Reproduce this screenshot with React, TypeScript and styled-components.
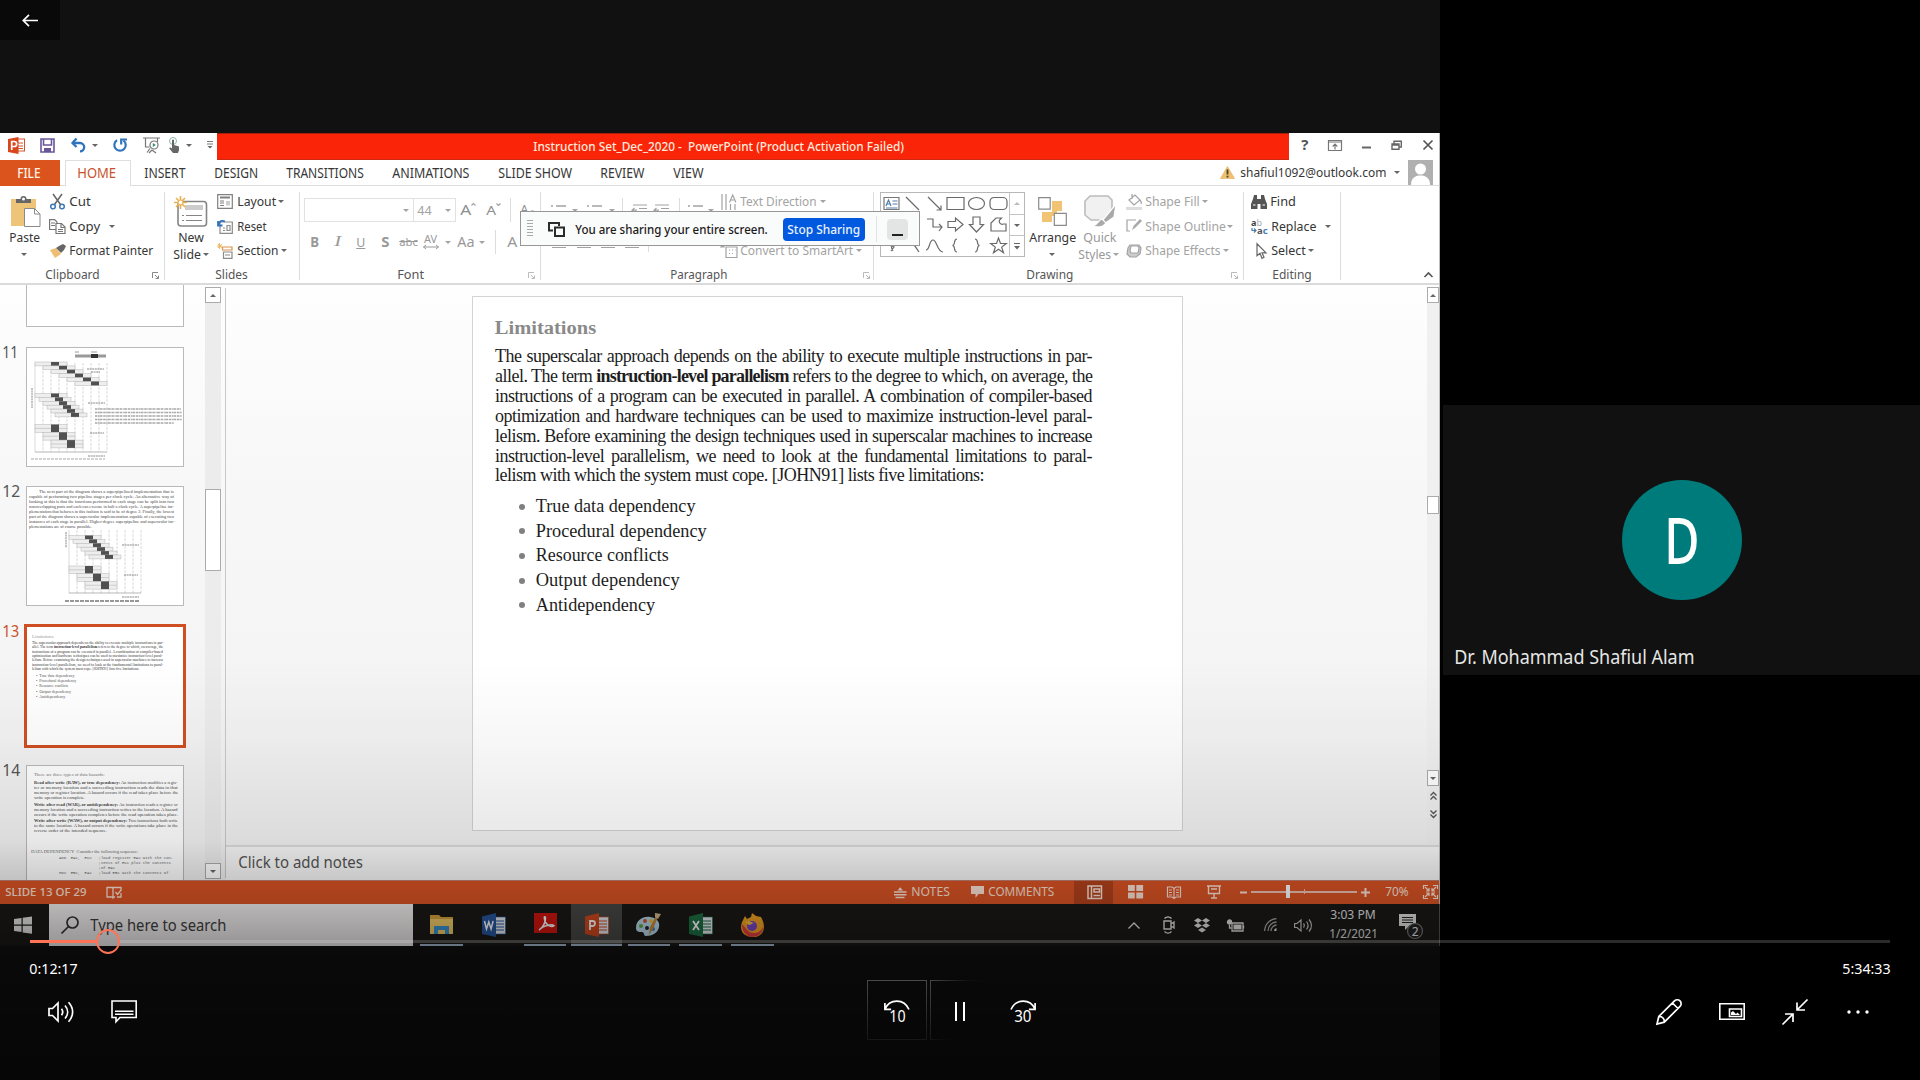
import React, { useLayoutEffect, useRef, useState } from "react";
import styled, { createGlobalStyle, css } from "styled-components";

const ui = `"Noto Sans", "Open Sans", sans-serif`;
const serif = `"Liberation Serif", serif`;

const Global = createGlobalStyle`
  * { box-sizing: border-box; }
  html, body { margin: 0; padding: 0; background: #000; overflow: hidden; }
`;

/* ---------- text that is condensed to a given width ---------- */

const FitBox = styled.span<{ $w: number; $size: number; $color?: string; $weight?: number; $ml?: number; $font?: string; $lh?: number }>`
  display: block;
  flex: none;
  width: ${(p) => p.$w}px;
  margin-left: ${(p) => p.$ml ?? 0}px;
  font-family: ${(p) => p.$font ?? ui};
  font-size: ${(p) => p.$size}px;
  font-weight: ${(p) => p.$weight ?? 400};
  color: ${(p) => p.$color ?? "#363636"};
  line-height: ${(p) => (p.$lh ? `${p.$lh}px` : "1.3")};
  white-space: pre;
`;
const FitInk = styled.span`
  display: inline-block;
  vertical-align: top;
  transform-origin: 0 50%;
`;

type FitProps = { w: number; size?: number; color?: string; weight?: number; ml?: number; font?: string; lh?: number; bearing?: number; children: React.ReactNode };
function Fit({ w, size = 13, color, weight, ml, font, lh, bearing = 0.75, children }: FitProps) {
  const ref = useRef<HTMLSpanElement>(null);
  const [scale, setScale] = useState(1);
  useLayoutEffect(() => {
    if (ref.current) setScale((w + bearing * 2) / ref.current.offsetWidth);
  }, [w, size, bearing, children]);
  return (
    <FitBox $w={w} $size={size} $color={color} $weight={weight} $ml={ml} $font={font} $lh={lh}>
      <FitInk ref={ref} style={{ transform: `translateX(${-bearing}px) scaleX(${scale})` }}>{children}</FitInk>
    </FitBox>
  );
}

/* ---------- shared parts ---------- */

const Svg = styled.svg<{ $ml?: number; $mt?: number }>`
  display: block;
  flex: none;
  margin-left: ${(p) => p.$ml ?? 0}px;
  margin-top: ${(p) => p.$mt ?? 0}px;
  overflow: visible;
`;
type IconProps = { w: number; h: number; ml?: number; mt?: number; vb?: string; children: React.ReactNode; c?: string; sw?: number };
const Icon = ({ w, h, ml, mt, vb, children, c = "#666", sw = 1.2 }: IconProps) => (
  <Svg width={w} height={h} $ml={ml} $mt={mt} viewBox={vb ?? `0 0 ${w} ${h}`} fill="none" stroke={c} strokeWidth={sw}>
    {children}
  </Svg>
);
const Caret = styled.i<{ $ml?: number; $mt?: number; $color?: string; $up?: boolean }>`
  flex: none;
  width: 0;
  height: 0;
  margin-left: ${(p) => p.$ml ?? 0}px;
  margin-top: ${(p) => p.$mt ?? 0}px;
  border-left: 3px solid transparent;
  border-right: 3px solid transparent;
  ${(p) => (p.$up ? css`border-bottom: 3.5px solid ${p.$color ?? "#666"};` : css`border-top: 3.5px solid ${p.$color ?? "#666"};`)}
`;
const Cell = styled.div<{ $w: number }>`
  flex: none;
  width: ${(p) => p.$w}px;
  display: flex;
  align-items: center;
  justify-content: center;
`;
const VLine = styled.div<{ $h: number }>`
  width: 1px;
  height: ${(p) => p.$h}px;
  background: #dcdcdc;
`;

/* ---------- stage ---------- */

const Stage = styled.div`
  position: relative;
  width: 1920px;
  height: 1080px;
  display: grid;
  grid-template-columns: 1440px 480px;
  overflow: hidden;
  background: #000;
  font-family: ${ui};
`;
const Shared = styled.div`
  display: flex;
  flex-direction: column;
  width: 1440px;
  height: 1080px;
  padding-top: 133px;
  background: #111;
`;
const Window = styled.div`
  flex: none;
  height: 771px;
  display: flex;
  flex-direction: column;
  background: #fff;
  border-right: 1px solid #bdbdbd;
  overflow: hidden;
`;

/* title bar */
const TitleBar = styled.div`
  flex: none;
  height: 27px;
  display: flex;
`;
const QuickAccess = styled.div`
  width: 217px;
  display: flex;
  align-items: center;
  padding-bottom: 3px;
`;
const RedTitle = styled.div`
  width: 1072px;
  padding: 2px 0 0 317px;
  background: #fa2508;
  border-top: 1px solid #a81d0c;
  border-bottom: 1px solid #cc2a12;
  display: flex;
  align-items: center;
`;
const WindowButtons = styled.div`
  width: 150px;
  display: flex;
  align-items: center;
  padding-bottom: 3px;
`;

/* tab row */
const TabRow = styled.div`
  flex: none;
  height: 26px;
  display: flex;
  border-bottom: 1px solid #dedede;
`;
const FileTab = styled.div`
  width: 60px;
  padding: 1px 0 0 18px;
  height: 26px;
  background: #db531d;
  display: flex;
  align-items: center;
`;
const HomeTab = styled.div`
  width: 66px;
  height: 26px;
  margin-left: 5px;
  padding: 1px 0 0 12px;
  background: #fff;
  border: 1px solid #dedede;
  border-bottom: 0;
  display: flex;
  align-items: center;
`;
const Tabs = styled.div`
  display: flex;
  align-items: center;
  gap: 30px;
  margin-left: 14px;
  padding-top: 2px;
`;
const Account = styled.div`
  margin-left: auto;
  width: 220px;
  display: flex;
  align-items: center;
`;

/* ribbon */
const Ribbon = styled.div`
  flex: none;
  height: 99px;
  display: flex;
  border-bottom: 2px solid #dadada;
`;
const Group = styled.div<{ $w: number }>`
  position: relative;
  flex: none;
  width: ${(p) => p.$w}px;
  display: grid;
  grid-template-rows: 81px 16px;
  &::after {
    content: "";
    position: absolute;
    right: 0;
    top: 6px;
    width: 1px;
    height: 88px;
    background: #dcdcdc;
  }
`;
const GroupBody = styled.div`
  display: flex;
`;
const GroupFoot = styled.div`
  display: flex;
  align-items: center;
`;
const Rows = styled.div<{ $ml?: number }>`
  display: grid;
  grid-template-rows: repeat(3, 24.5px);
  align-content: start;
  padding-top: 3.5px;
  margin-left: ${(p) => p.$ml ?? 0}px;
`;
const Row = styled.div`
  display: flex;
  align-items: center;
`;
const BigButton = styled.div<{ $w: number; $ml?: number; $pt?: number }>`
  width: ${(p) => p.$w}px;
  margin-left: ${(p) => p.$ml ?? 0}px;
  padding-top: ${(p) => p.$pt ?? 7}px;
  display: grid;
  grid-template-rows: 36px 17px 16px;
  align-content: start;
  justify-items: center;
  align-items: center;
`;
const FontRows = styled.div`
  display: grid;
  grid-template-rows: 24px 20px;
  align-content: start;
  row-gap: 10px;
  padding: 12px 0 0 4px;
`;
const Combo = styled.div<{ $w: number }>`
  width: ${(p) => p.$w}px;
  height: 24px;
  border: 1px solid #e1e1e1;
  display: flex;
  align-items: center;
  justify-content: flex-end;
  padding-right: 4px;
  & + & { border-left: 0; }
`;
const Gallery = styled.div`
  width: 145px;
  height: 65px;
  margin: 6px 0 0 6px;
  border: 1px solid #b8b8b8;
  display: grid;
  grid-template-columns: 128px 15px;
`;
const Shapes = styled.div`
  display: grid;
  grid-template-columns: repeat(6, 21.3px);
  grid-template-rows: repeat(3, 21px);
  align-items: center;
  justify-items: center;
`;
const GalleryScroll = styled.div`
  display: grid;
  grid-template-rows: repeat(3, 21px);
  border-left: 1px solid #c4c4c4;
`;
const GalleryStep = styled.div`
  display: flex;
  align-items: center;
  justify-content: center;
  & + & { border-top: 1px solid #c4c4c4; }
`;

/* sharing bar */
const ShareBar = styled.div`
  position: absolute;
  left: 520px;
  top: 211px;
  width: 400px;
  height: 35px;
  padding-top: 1px;
  background: #fafbfb;
  border: 1.5px solid #979797;
  display: flex;
  align-items: center;
`;
const Grip = styled.div`
  width: 6px;
  height: 18px;
  margin-left: 6px;
  background: repeating-linear-gradient(#a8a8a8 0 1px, transparent 1px 3px);
`;
const StopButton = styled.div`
  width: 82px;
  height: 23px;
  margin-left: 16px;
  border-radius: 4px;
  background: #0059de;
  padding: 1px 0 0 5px;
  display: flex;
  align-items: center;
`;
const ShareDivider = styled.div`
  width: 1px;
  height: 26px;
  margin-left: 11px;
  background: #e3e3e3;
`;
const HideButton = styled.div`
  width: 21px;
  height: 21px;
  margin-left: 10px;
  border-radius: 4px;
  background: #e3e4e4;
  display: flex;
  justify-content: center;
  padding-top: 15px;
  &::after { content: ""; width: 11px; height: 2px; background: #222; }
`;

/* work area */
const Work = styled.div`
  flex: none;
  height: 595px;
  display: grid;
  grid-template-columns: 205px 16px 5px 1213px;
  background: linear-gradient(#fefefe, #f8f8f8 30%, #f1f1f1);
`;
const ThumbList = styled.div`
  height: 595px;
  overflow: hidden;
  display: flex;
  flex-direction: column;
`;
const ThumbRow = styled.div<{ $mt: number }>`
  flex: none;
  display: flex;
  margin-top: ${(p) => p.$mt}px;
`;
const ThumbNo = styled.div`
  width: 26px;
  padding-left: 3px;
  margin-top: -6px;
`;
const Thumb = styled.div<{ $on?: boolean }>`
  width: 158px;
  height: 120px;
  background: #fff;
  outline: ${(p) => (p.$on ? "3px solid #cf4f22" : "0")};
  border: 1px solid ${(p) => (p.$on ? "#cf4f22" : "#b9b9b9")};
  outline-offset: -1px;
`;
const Tiny = styled.div<{ $pl: number; $pt: number }>`
  display: flex;
  flex-direction: column;
  padding: ${(p) => p.$pt}px 0 0 ${(p) => p.$pl}px;
`;
const ScrollTrack = styled.div`
  height: 592px;
  margin-top: 2px;
  background: #ececec;
  display: flex;
  flex-direction: column;
`;
const ScrollButton = styled.div<{ $mt?: number; $plain?: boolean }>`
  height: 16px;
  margin-top: ${(p) => p.$mt ?? 0}px;
  border: ${(p) => (p.$plain ? "0" : "1px solid #ababab")};
  background: ${(p) => (p.$plain ? "transparent" : "#fff")};
  display: flex;
  align-items: center;
  justify-content: center;
`;
const ScrollThumb = styled.div<{ $mt: number; $h: number }>`
  height: ${(p) => p.$h}px;
  margin-top: ${(p) => p.$mt}px;
  background: #fff;
  border: 1px solid #ababab;
`;
const Divider = styled.div`
  width: 1px;
  height: 590px;
  margin: 3px 0 0 4px;
  background: #c8c8c8;
`;
const Editor = styled.div`
  display: grid;
  grid-template-rows: 560px 35px;
`;
const Canvas = styled.div`
  display: grid;
  grid-template-columns: 1201px 12px;
`;
const Slide = styled.div`
  width: 711px;
  height: 535px;
  margin: 11px 0 0 246px;
  background: #fff;
  border: 1px solid #d3d3d3;
  padding: 20px 0 0 22px;
`;
const SlideTitle = styled.h1`
  margin: 0;
  font: 700 18px/22px ${serif};
  color: #8a8a8a;
`;
const BodyText = styled.p`
  margin: 8px 0 0;
  width: 598px;
  font: 400 18px/19.9px ${serif};
  letter-spacing: -0.52px;
  color: #1d1d1d;
`;
const BodyLine = styled.span<{ $w?: number }>`
  display: block;
  width: ${(p) => p.$w ?? 597}px;
  text-align-last: justify;
  white-space: nowrap;
  b { letter-spacing: -0.8px; }
`;
const Bullets = styled.ul`
  margin: 8px 0 0;
  padding: 0 0 0 24px;
  list-style: none;
`;
const Bullet = styled.li`
  height: 24.7px;
  display: flex;
  align-items: center;
  &::before {
    content: "";
    width: 6px;
    height: 6px;
    border-radius: 3px;
    margin-right: 11px;
    background: #808080;
  }
`;
const RightScroll = styled.div`
  margin-top: 2px;
  display: flex;
  flex-direction: column;
  background: #f0f0f0;
`;
const Notes = styled.div`
  border-top: 2px solid #dcdcdc;
  display: flex;
  align-items: center;
  padding: 0 0 2px 13px;
  background: #f8f8f8;
`;

/* status bar */
const StatusBar = styled.div`
  flex: none;
  height: 24px;
  background: #dc5425;
  border-top: 1px solid #c08070;
  padding-bottom: 1px;
  display: flex;
  align-items: center;
`;
const ActiveView = styled.div`
  width: 39px;
  height: 23px;
  margin-left: 20px;
  background: #b5421c;
  display: flex;
  align-items: center;
  justify-content: center;
`;
const ZoomTrack = styled.div`
  position: relative;
  width: 106px;
  height: 1.5px;
  margin-left: 4px;
  background: #f0c4b4;
  &::before {
    content: "";
    position: absolute;
    left: 35px;
    top: -6px;
    width: 4px;
    height: 13px;
    background: #fff;
  }
  &::after {
    content: "";
    position: absolute;
    left: 53px;
    top: -2px;
    width: 1px;
    height: 5px;
    background: #f0c4b4;
  }
`;

/* taskbar */
const Taskbar = styled.div`
  flex: none;
  height: 42px;
  display: flex;
  background: #1a1917;
  border-right: 1px solid #555;
`;
const Start = styled.div`
  width: 49px;
  display: flex;
  align-items: center;
  padding-left: 14px;
`;
const Search = styled.div`
  width: 364px;
  background: #f4f1f1;
  display: flex;
  align-items: center;
  padding-left: 12px;
`;
const AppButton = styled.div<{ $ml: number; $w: number; $open?: boolean; $on?: boolean }>`
  width: ${(p) => p.$w}px;
  margin-left: ${(p) => p.$ml}px;
  padding-top: 9px;
  display: flex;
  justify-content: center;
  align-items: flex-start;
  background: ${(p) => (p.$on ? "#484846" : "transparent")};
  border-bottom: ${(p) => (p.$open ? "2px solid #a9bcd2" : "0")};
`;
const Tray = styled.div`
  margin-left: auto;
  width: 311px;
  display: flex;
  align-items: center;
`;
const Clock = styled.div`
  margin-left: 17px;
  width: 48px;
  display: grid;
  grid-template-rows: 19px 19px;
  justify-items: center;
  align-items: center;
`;

/* participants */
const Participants = styled.div`
  padding: 405px 0 0 3px;
`;
const Tile = styled.div`
  height: 270px;
  background: #111;
  display: grid;
  grid-template-rows: 195px 75px;
  padding-left: 12px;
`;
const Avatar = styled.div`
  width: 120px;
  height: 120px;
  margin: 75px 0 0 167px;
  border-radius: 50%;
  background: #007b7b;
  display: flex;
  align-items: center;
  justify-content: center;
`;
const TileName = styled.div`
  padding-top: 44px;
`;

/* player chrome */
const Player = styled.div`
  position: absolute;
  inset: 0;
  display: grid;
  grid-template-rows: 40px 1fr 154px;
  background: linear-gradient(transparent 660px, rgba(0,0,0,.03) 740px, rgba(0,0,0,.09) 840px, rgba(0,0,0,.2) 882px, rgba(0,0,0,.25) 905px, rgba(0,0,0,.38) 944px, rgba(0,0,0,.48) 960px, rgba(0,0,0,.66) 1080px);
`;
const Back = styled.div`
  width: 60px;
  height: 40px;
  background: #090909;
  display: flex;
  align-items: center;
  justify-content: center;
`;
const Controls = styled.div`
  grid-row: 3;
  display: grid;
  grid-template-rows: 31px 23px 1fr;
`;
const Seek = styled.div`
  display: flex;
  align-items: center;
  padding: 0 30px;
`;
const Played = styled.div`
  width: 66px;
  height: 3px;
  background: #ff7357;
`;
const Knob = styled.div`
  width: 24px;
  height: 25px;
  border: 2px solid #ff7357;
  border-radius: 50%;
`;
const Remaining = styled.div`
  flex: 1;
  height: 3px;
  background: rgba(255, 255, 255, 0.17);
`;
const Times = styled.div`
  display: flex;
  justify-content: space-between;
  align-items: center;
  padding: 0 30px;
`;
const ButtonBar = styled.div`
  display: grid;
  grid-template-columns: 1fr auto 1fr;
  align-items: start;
`;
const Buttons = styled.div<{ $end?: boolean }>`
  display: flex;
  gap: 3px;
  padding: 0 32px 0 31px;
  justify-content: ${(p) => (p.$end ? "flex-end" : "flex-start")};
`;
const Centre = styled(Buttons)`
  padding: 0;
`;
const Button = styled.div<{ $frame?: "full" | "fade" }>`
  width: 60px;
  height: 60px;
  padding-top: 3px;
  display: grid;
  place-items: center;
  border: 1px solid transparent;
  ${(p) => p.$frame === "full" && css`border-image: linear-gradient(#4a4a4a, #161616) 1;`}
  ${(p) => p.$frame === "fade" && css`border-image: linear-gradient(120deg, #4a4a4a, #111 40%, transparent 60%) 1;`}
`;
const SkipStack = styled.div`
  display: grid;
  grid-template-rows: 10px 13px;
  justify-items: center;
  align-items: center;
`;

/* ---------- drawings ---------- */

function Stairs({ x, y, n, dx, dy, bw = 8 }: { x: number; y: number; n: number; dx: number; dy: number; bw?: number }) {
  return (
    <g>
      {Array.from({ length: n }, (_, i) => (
        <g key={i}>
          <rect x={x + i * dx} y={y + i * dy} width={bw * 4} height={dy} fill="#eee" stroke="#b5b5b5" strokeWidth={0.5} />
          {dy > 5 && <path d={`M${x + i * dx} ${y + i * dy + dy / 2}h${bw * 4}`} stroke="#aaa" strokeWidth={0.5} />}
          <rect x={x + bw * 2 + i * dx} y={y + i * dy} width={bw} height={dy} fill="#505050" stroke="none" />
        </g>
      ))}
    </g>
  );
}
const Dashes = ({ x, y, n, h }: { x: number; y: number; n: number; h: number }) => (
  <g stroke="#c4c4c4" strokeWidth={0.6}>
    {Array.from({ length: n }, (_, i) => <path key={i} d={`M${x + i * 8} ${y}v${h}`} strokeDasharray={i ? "3 1" : "none"} />)}
    <path d={`M${x} ${y + h}h${(n - 1) * 8}`} stroke="#888" />
  </g>
);

const GRAY = "#a3a3a3";

const bodyLines: [React.ReactNode, number?][] = [
  ["The superscalar approach depends on the ability to execute multiple instructions in par-"],
  [<>allel. The term <b>instruction-level parallelism</b> refers to the degree to which, on average, the</>],
  ["instructions of a program can be executed in parallel. A combination of compiler-based"],
  ["optimization and hardware techniques can be used to maximize instruction-level paral-"],
  ["lelism. Before examining the design techniques used in superscalar machines to increase"],
  ["instruction-level parallelism, we need to look at the fundamental limitations to paral-"],
  ["lelism with which the system must cope. [JOHN91] lists five limitations:", 489],
];
const bullets: [string, number][] = [
  ["True data dependency", 159],
  ["Procedural dependency", 170],
  ["Resource conflicts", 132],
  ["Output dependency", 143],
  ["Antidependency", 119],
];
const slide12 = [
  "The next part of the diagram shows a superpipelined implementation that is",
  "capable of performing two pipeline stages per clock cycle. An alternative way of",
  "looking at this is that the functions performed in each stage can be split into two",
  "nonoverlapping parts and each can execute in half a clock cycle. A superpipeline im-",
  "plementation that behaves in this fashion is said to be of degree 2. Finally, the lowest",
  "part of the diagram shows a superscalar implementation capable of executing two",
  "instances of each stage in parallel. Higher-degree superpipeline and superscalar im-",
  "plementations are of course possible.",
];
const slide14: [string, string[], number][] = [
  ["Read after write (RAW), or true dependency:", ["An instruction modifies a regis-", "ter or memory location and a succeeding instruction reads the data in that", "memory or register location. A hazard occurs if the read takes place before the", "write operation is complete."], 51],
  ["Write after read (WAR), or antidependency:", ["An instruction reads a register or", "memory location and a succeeding instruction writes to the location. A hazard", "occurs if the write operation completes before the read operation takes place."], 144],
  ["Write after write (WAW), or output dependency:", ["Two instructions both write", "to the same location. A hazard occurs if the write operations take place in the", "reverse order of the intended sequence."], 73],
];

const tabs: [string, number][] = [["INSERT", 40], ["DESIGN", 42], ["TRANSITIONS", 76], ["ANIMATIONS", 76], ["SLIDE SHOW", 72], ["REVIEW", 43], ["VIEW", 29]];

const Launcher = ({ ml, c = "#888" }: { ml: number; c?: string }) => (
  <Icon w={7} h={7} ml={ml} c={c} sw={1}><path d="M.5 6V.5H6M3 3l3.500 3.500M6.500 3.500v3h-3" /></Icon>
);

function TopBar() {
  return (
    <TitleBar>
      <QuickAccess>
        <Icon w={17} h={17} ml={8} sw={1}>
          <rect x="9" y="2" width="7.500" height="12" fill="#fff" stroke="#d2552c" />
          <path d="M10 6h5M10 9h5M10 11.500h5" stroke="#d2552c" />
          <path d="M0 2L10.500 0v17L0 15z" fill="#d9461c" stroke="none" />
          <path d="M3.700 13V4.500h2.500a2.300 2.300 0 0 1 0 5H4" stroke="#fff" strokeWidth="1.700" />
        </Icon>
        <Icon w={15} h={15} ml={15} c="#6a559b" sw={1.600}><path d="M1 1h13v13H1zM3.500 1v6h8V1" /><rect x="4" y="10" width="7" height="4" fill="#6a559b" stroke="none" /></Icon>
        <Icon w={15} h={14} ml={16} c="#2f74bd" sw={2.300}><path d="M1.500 5h7.500a4.200 4.200 0 0 1 0 8.400" /><path d="M5.500 .5L1.500 5l4 4" /></Icon>
        <Caret $ml={6} />
        <Icon w={14} h={14} ml={15} c="#2f74bd" sw={2.200}><path d="M4 2.200A5.700 5.700 0 1 0 10.500 2.500" /><path d="M8.200 6.500V1.500H14" /></Icon>
        <Icon w={17} h={16} ml={16} c="#777" sw={1.200}><path d="M0 1h17M2.500 1v9h4M14.500 1v4M4 15.500l3-4M9 13l-3 3M9 13l4 3" /><circle cx="11" cy="8" r="4" /><path d="M9.800 6l3 2-3 2z" fill="#3a8d6b" stroke="none" /></Icon>
        <Icon w={12} h={16} ml={8} c="#777" sw={1}><circle cx="5" cy="4" r="3.500" stroke="#8cb5a8" /><path d="M4 3.500a1 1 0 0 1 2 0V8l5 1.500V13l-1 3H5L1 11l1.500-.5L4 11.500z" fill="#666" stroke="none" /></Icon>
        <Caret $ml={6} />
        <Icon w={6} h={8} ml={15} c="#777" sw={1}><path d="M0 .5h6M0 3h6" /><path d="M.5 5h5L3 7.500z" fill="#666" stroke="none" /></Icon>
      </QuickAccess>
      <RedTitle><Fit w={369} size={12.500} weight={500} color="#ffe9dc">{"Instruction Set_Dec_2020 -  PowerPoint (Product Activation Failed)"}</Fit></RedTitle>
      <WindowButtons>
        <Fit w={6} ml={13} size={14} weight={700} color="#555">?</Fit>
        <Icon w={14} h={11} ml={20} c="#777"><path d="M.5 .5h13v10H.5zM.5 2h13M7 9.500V4.500M4.700 6.500L7 4.200l2.300 2.300" /></Icon>
        <Icon w={9} h={3} ml={20} mt={4} c="#666" sw={2}><path d="M0 1.500h9" /></Icon>
        <Icon w={11} h={10} ml={20} c="#666" sw={1.400}><path d="M1 4h7v5.300H1zM3 4V1.200h7.300V7H8M1 5h7" /></Icon>
        <Icon w={10} h={10} ml={21} c="#555" sw={1.700}><path d="M.5 .5l9 9M9.500 .5l-9 9" /></Icon>
      </WindowButtons>
    </TitleBar>
  );
}

function TabStrip() {
  return (
    <TabRow>
      <FileTab><Fit w={22} size={13.500} weight={500} color="#fff3ea">FILE</Fit></FileTab>
      <HomeTab><Fit w={37} size={13.500} color="#c9522b">HOME</Fit></HomeTab>
      <Tabs>{tabs.map(([t, w]) => <Fit key={t} w={w} size={13.500}>{t}</Fit>)}</Tabs>
      <Account>
        <Icon w={15} h={13} ml={1} c="#eec27a" sw={1}><path d="M7.500 .5L14.500 12.500H.5z" fill="#eebf6f" /><path d="M7.500 3.500v5M7.500 9.700v1.700" stroke="#443" strokeWidth="1.800" /></Icon>
        <Fit w={145} ml={6} size={13}>shafiul1092@outlook.com</Fit>
        <Caret $ml={8} />
        <Icon w={24} h={25} ml={8} c="none"><rect width="25" height="25" fill="#b0b0b0" /><circle cx="12.500" cy="9" r="5.500" fill="#fff" /><path d="M3 25c0-7 4-9.500 9.500-9.500S22 18 22 25z" fill="#fff" /></Icon>
      </Account>
    </TabRow>
  );
}

function ClipboardGroup() {
  return (
    <Group $w={165}>
      <GroupBody>
        <BigButton $w={44} $ml={4}>
          <Icon w={31} h={33} ml={-2} sw={1}>
            <rect x="1" y="4" width="25" height="27" fill="#eec479" stroke="none" />
            <path d="M6 8V4h4.500a3 3 0 0 1 6 0H21v4z" fill="#666" stroke="none" /><circle cx="13.500" cy="4" r="1.500" fill="#fff" stroke="none" />
            <path d="M14.500 13.500h10l5.500 5.500v12.500H14.500z" fill="#fff" stroke="#8a8a8a" /><path d="M24.500 13.500V19H30" stroke="#8a8a8a" />
          </Icon>
          <Fit w={29} ml={-4}>Paste</Fit>
          <Caret $ml={-4} />
        </BigButton>
        <Rows $ml={2}>
          <Row>
            <Icon w={15} h={16} c="#666" sw={1.500}><path d="M3 0l7.500 10.500M12 0L4.500 10.500" /><circle cx="3" cy="12.500" r="2.300" stroke="#3e78b2" /><circle cx="12" cy="12.500" r="2.300" stroke="#3e78b2" /></Icon>
            <Fit w={20} ml={5}>Cut</Fit>
          </Row>
          <Row>
            <Icon w={17} h={15} ml={-1} c="#777"><path d="M.6 .6h5L8 3v7.500H.6zM2 4h4M2 6.500h4" /><path d="M7 4.500h5.500L16 8v6.500H7z" fill="#fff" /><path d="M12 4.500V8.500h4M9 10.500h5M9 12.500h5" /></Icon>
            <Fit w={29} ml={4}>Copy</Fit><Caret $ml={10} />
          </Row>
          <Row>
            <Icon w={16} h={14} c="none"><path d="M0 6l6-2 5 6-6 4z" fill="#eebf72" /><path d="M6 4l3-2 4-2 3 2-2 4-3 3z" fill="#666" /></Icon>
            <Fit w={82} ml={4}>Format Painter</Fit>
          </Row>
        </Rows>
      </GroupBody>
      <GroupFoot><Fit w={53} ml={46} size={12.500} color="#555">Clipboard</Fit><Launcher ml={53} /></GroupFoot>
    </Group>
  );
}

function SlidesGroup() {
  return (
    <Group $w={135}>
      <GroupBody>
        <BigButton $w={40} $ml={6}>
          <Icon w={34} h={31} ml={-1} c="#858585">
            <rect x="4" y="5.500" width="28.500" height="24.500" rx="3" fill="#fff" strokeWidth="1.600" />
            <rect x="11" y="9" width="18" height="5" fill="#ccc" stroke="none" /><path d="M8 19.500h2M12 19.500h16M8 24.500h2M12 24.500h16" />
            <path d="M6.500 0v13M0 6.500h13M2 2l9 9M11 2l-9 9" stroke="#e8b252" strokeWidth="1.600" /><circle cx="6.500" cy="6.500" r="2.500" fill="#fff" stroke="#e8b252" />
          </Icon>
          <Fit w={24}>New</Fit>
          <Row><Fit w={26}>Slide</Fit><Caret $ml={3} /></Row>
        </BigButton>
        <Rows $ml={6}>
          <Row>
            <Icon w={16} h={15} c="#808080"><path d="M.7 .7h14.600v13.600H.7z" /><path d="M3 3.500h10" strokeWidth="2" /><path d="M3 7h4M3 9h4M3 11.500h4" /><path d="M9 7h4v4.500H9z" fill="#ccc" stroke="none" /></Icon>
            <Fit w={37} ml={5}>Layout</Fit><Caret $ml={3} />
          </Row>
          <Row>
            <Icon w={16} h={15} c="#8a8a8a"><path d="M3 3h12.300v11.300H3zM6 9h2M6 11.500h2M10 6.500h3v5h-3z" /><path d="M1.500 6C2 2 5 1 8 2.500M1 2v4.500h4.500" stroke="#2f74bd" strokeWidth="1.800" /></Icon>
            <Fit w={28} ml={5}>Reset</Fit>
          </Row>
          <Row>
            <Icon w={16} h={16} c="#8a8a8a"><path d="M6.500 9h8.500v6.300H6.500zM8 12h5" /><path d="M5.500 4h9.500v3H5.500z" stroke="#d9944a" /><path d="M2.500 0v6M0 3h5M.8 1l4 4M4.800 1l-4 4" stroke="#e8b252" strokeWidth=".9" /></Icon>
            <Fit w={40} ml={5}>Section</Fit><Caret $ml={3} />
          </Row>
        </Rows>
      </GroupBody>
      <GroupFoot><Fit w={31} ml={51} size={12.500} color="#555">Slides</Fit></GroupFoot>
    </Group>
  );
}

function FontGroup() {
  return (
    <Group $w={241}>
      <FontRows>
        <Row>
          <Combo $w={110}><Caret $color={GRAY} /></Combo>
          <Combo $w={42}><Fit w={13} color={GRAY}>44</Fit><Caret $ml={14} $color={GRAY} /></Combo>
          <Cell $w={25}><Fit w={10} size={15} color="#909090">A</Fit><Icon w={5} h={3} mt={-11} c={GRAY}><path d="M.5 2.500l2-2 2 2" /></Icon></Cell>
          <Cell $w={25}><Fit w={8} size={13} color="#909090">A</Fit><Icon w={5} h={3} ml={1} mt={-11} c={GRAY}><path d="M.5 .5l2 2 2-2" /></Icon></Cell>
          <Cell $w={9}><VLine $h={24} /></Cell>
          <Cell $w={27}><Fit w={7} size={12} color="#909090">A</Fit><Icon w={9} h={6} mt={6} c="none"><path d="M0 4l4-4 5 2-2 4H2z" fill="#aaa" /></Icon></Cell>
        </Row>
        <Row>
          <Cell $w={21}><Fit w={7} size={14} weight={700} color="#999">B</Fit></Cell>
          <Cell $w={25}><Fit w={6} size={14} font={serif} color="#999"><i>I</i></Fit></Cell>
          <Cell $w={22}><Fit w={8} size={13} color="#999"><u>U</u></Fit></Cell>
          <Cell $w={26}><Fit w={7} size={14} weight={700} color="#999">S</Fit></Cell>
          <Cell $w={21}><Fit w={17} size={11.500} color="#999"><s>abc</s></Fit></Cell>
          <Cell $w={24}><Icon w={16} h={16} c="#999" sw={1}><text x="1" y="9" fontSize="11" fontFamily={ui} fill="#999" stroke="none" textLength="13">AV</text><path d="M.5 13h15M3 11L.5 13 3 15M13 11l2.500 2-2.500 2" /></Icon></Cell>
          <Cell $w={9}><Caret $color={GRAY} /></Cell>
          <Cell $w={27}><Fit w={16} size={14} color="#999">Aa</Fit></Cell>
          <Cell $w={6}><Caret $color={GRAY} /></Cell>
          <Cell $w={21}><VLine $h={24} /></Cell>
          <Cell $w={13}><Fit w={9} size={15} color="#999">A</Fit></Cell>
        </Row>
      </FontRows>
      <GroupFoot><Fit w={25} ml={98} size={12.500} color="#555">Font</Fit><Launcher ml={105} c="#bbb" /></GroupFoot>
    </Group>
  );
}

const ListGlyph = ({ indent }: { indent?: boolean }) => (
  <Icon w={15} h={12} c={GRAY}>{indent ? <path d="M1 1h14M7 4.500h8M7 8h8M1 11.500h14M5 6.200H0M2.500 4L0 6.200l2.500 2.300" /> : <path d="M5 2h10M5 8h10M0 2h2M0 8h2" strokeWidth="1.500" />}</Icon>
);

function ParagraphGroup() {
  return (
    <Group $w={333}>
      <GroupBody>
        <FontRows>
          <Row>
            <Cell $w={26}><ListGlyph /></Cell><Cell $w={8}><Caret $color={GRAY} /></Cell>
            <Cell $w={30}><ListGlyph /></Cell><Cell $w={6}><Caret $color={GRAY} /></Cell>
            <Cell $w={14}><VLine $h={24} /></Cell>
            <Cell $w={20}><ListGlyph indent /></Cell><Cell $w={25}><ListGlyph indent /></Cell>
            <Cell $w={10}><VLine $h={24} /></Cell>
            <Cell $w={22}><ListGlyph /></Cell><Cell $w={10}><Caret $color={GRAY} /></Cell>
          </Row>
          <Row>
            <Cell $w={26}><ListGlyph indent /></Cell><Cell $w={24}><ListGlyph indent /></Cell>
            <Cell $w={24}><ListGlyph indent /></Cell><Cell $w={24}><ListGlyph indent /></Cell>
            <Cell $w={10}><VLine $h={20} /></Cell><Cell $w={22}><ListGlyph /></Cell>
          </Row>
        </FontRows>
        <Rows $ml={5}>
          <Row>
            <Icon w={16} h={16} c={GRAY}><path d="M1 0v16M5 0v16M9.500 10v6M14 10v6" /><path d="M8.500 8.500L11.700 1l3.200 7.500M9.500 6h4.500" /></Icon>
            <Fit w={75} ml={4} color={GRAY}>Text Direction</Fit><Caret $ml={4} $color={GRAY} />
          </Row>
          <Row />
          <Row>
            <Icon w={17} h={15} c={GRAY}><path d="M5 4h11v10.500H5zM8 7h1M11 7h1M8 10.500h1M11 10.500h1M14 7h.5" /><path d="M0 4l3-3.500V4z" fill={GRAY} /></Icon>
            <Fit w={111} ml={3} color={GRAY}>Convert to SmartArt</Fit><Caret $ml={4} $color={GRAY} />
          </Row>
        </Rows>
      </GroupBody>
      <GroupFoot><Fit w={56} ml={130} size={12.500} color="#555">Paragraph</Fit><Launcher ml={136} c="#bbb" /></GroupFoot>
    </Group>
  );
}

const shapePaths: React.ReactNode[] = [
  <g key="tb"><path d="M0 1.500h15v12H0z" stroke="#777" /><path d="M2 10l2.500-6 2.500 6M3 8h3M8.500 5h5M8.500 8h5M2 12h11.500" stroke="#4f7cac" /></g>,
  <path key="l" d="M1 1l13 13" />,
  <path key="a" d="M1 1l13 13M14 9.500V14H9.500" />,
  <path key="r" d="M-1 1.500h17v12H-1z" />,
  <ellipse key="o" cx="7.500" cy="7.500" rx="8" ry="6" />,
  <rect key="rr" x="-1" y="1.500" width="17" height="12" rx="4" />,
  <path key="t" d="M1 13L7.500 2 14 13z" />,
  <path key="e1" d="M1 2h7v11h6" />,
  <path key="e2" d="M0 2h6v8h9M12 7l3 3-3 4" />,
  <path key="ar" d="M0 4.500h7.500V1L15 7.500 7.500 14v-3.500H0z" />,
  <path key="ad" d="M4 0h7v7.500h3.500L7.500 15 .5 7.500H4z" />,
  <path key="f" d="M0 14V6l5-5h5.500L8.500 3a3 3 0 0 0 4 4H15v7z" />,
  <path key="s1" d="M4 6c5 0 2 3 5 7M5 7l5 2-3 4" />,
  <path key="s2" d="M1 2c6 0 8 5 13 12" />,
  <path key="c" d="M-1 12C3 12 2 2 6 2s4 12 10 12" />,
  <path key="b1" d="M9 1C5 1 8 7 4.500 7.500 8 8 5 14 9 14" />,
  <path key="b2" d="M6 1c4 0 1 6 4.500 6.500C7 8 10 14 6 14" />,
  <path key="st" d="M7.500 0l2 5.500h5.800l-4.600 3.600 1.800 5.700-5-3.500-5 3.500 1.800-5.700L-.3 5.500h5.800z" />,
];

function DrawingGroup() {
  return (
    <Group $w={370}>
      <GroupBody>
        <Gallery>
          <Shapes>{shapePaths.map((p, i) => <Icon key={i} w={15} h={15} c="#6a6a6a" sw={1.200}>{p}</Icon>)}</Shapes>
          <GalleryScroll>
            <GalleryStep><Caret $up $color="#bbb" /></GalleryStep>
            <GalleryStep><Caret /></GalleryStep>
            <GalleryStep><Icon w={6} h={7} c="#666" sw={1}><path d="M0 .5h6" /><path d="M0 3h6L3 6.500z" fill="#666" stroke="none" /></Icon></GalleryStep>
          </GalleryScroll>
        </Gallery>
        <BigButton $w={50} $ml={2}>
          <Icon w={29} h={29} c="#8a8a8a">
            <path d="M14 4h10v10H14zM4 15h10v10H4z" fill="#f0c375" stroke="none" /><path d="M14 14h5v5h-5z" fill="#f0c375" stroke="none" />
            <path d="M.7 .7h11.500v11.500H.7z" fill="#fff" /><path d="M16.300 16.300h12v12h-12z" fill="#fff" />
          </Icon>
          <Fit w={45}>Arrange</Fit>
          <Caret />
        </BigButton>
        <BigButton $w={44} $ml={0} $pt={7}>
          <Icon w={33} h={33} ml={3} c="#b5b5b5">
            <path d="M6 1h18l4 4v16l-5 4H7l-6-5V6z" fill="#f1f1f1" stroke="#bcbcbc" strokeWidth="1.600" />
            <path d="M32 9l-2 13-10 7-2-3z" fill="#a9a9a9" stroke="#fff" /><path d="M18 24l4 4c-3 4-7 5-13 3 5-1 5-6 9-7z" fill="#a9a9a9" stroke="#fff" />
          </Icon>
          <Fit w={32} ml={1} color="#999">Quick</Fit>
          <Row><Fit w={31} color="#999">Styles</Fit><Caret $ml={3} $color={GRAY} /></Row>
        </BigButton>
        <Rows $ml={6}>
          <Row>
            <Icon w={16} h={17} ml={-1} c={GRAY}><path d="M6 1v5M3 7l6-5 5 5-6 5z M14 7c2 2 1 4 1 4" /><path d="M0 14h16v3H0z" fill="#ddd" stroke="none" /></Icon>
            <Fit w={53} ml={4} color={GRAY}>Shape Fill</Fit><Caret $ml={3} $color={GRAY} />
          </Row>
          <Row>
            <Icon w={16} h={14} ml={-1} c={GRAY}><path d="M10 1H1v11h3" /><path d="M6 11l1.500-4L14 0l2 2-7 7z" fill="#aaa" stroke="none" /></Icon>
            <Fit w={79} ml={4} color={GRAY}>Shape Outline</Fit><Caret $ml={2} $color={GRAY} />
          </Row>
          <Row>
            <Icon w={16} h={14} ml={-1} c={GRAY}><path d="M4 1h9l2 3-1 6-4 3H4L1 10l1-6z" fill="#ccc" /><path d="M5 2h7l1 2-1 5H5L4 7z" fill="#fff" /></Icon>
            <Fit w={74} ml={4} color={GRAY}>Shape Effects</Fit><Caret $ml={3} $color={GRAY} />
          </Row>
        </Rows>
      </GroupBody>
      <GroupFoot><Fit w={46} ml={153} size={12.500} color="#555">Drawing</Fit><Launcher ml={158} c="#bbb" /></GroupFoot>
    </Group>
  );
}

function EditingGroup() {
  return (
    <Group $w={97}>
      <GroupBody>
        <Rows $ml={7}>
          <Row>
            <Icon w={16} h={14} c="none"><path d="M2 4l1-4h3v4h4V0h3l1 4 2 5v5H9.500V9h-3v5H0V9z" fill="#555" /><path d="M2 10h2.500M11.500 10H14" stroke="#fff" /></Icon>
            <Fit w={24} ml={4}>Find</Fit>
          </Row>
          <Row>
            <Icon w={17} h={15} c="none">
              <text x="0" y="6.500" fontSize="9" fontWeight="700" fontFamily={ui} fill="#444">a<tspan fill="#aaa" fontWeight="400">b</tspan></text>
              <text x="6" y="14.500" fontSize="9.500" fontWeight="700" fontFamily={ui} fill="#555">a<tspan fill="#4a7eb5">c</tspan></text><path d="M1 9v2.500h3.500M3 9.500l2 2-2 2" stroke="#4a7eb5" />
            </Icon>
            <Fit w={44} ml={4}>Replace</Fit><Caret $ml={9} />
          </Row>
          <Row>
            <Icon w={10} h={16} ml={5} c="#666"><path d="M1 .8v12l3-2.500 2 5 2-1-2-4.500h4z" /></Icon>
            <Fit w={33} ml={6}>Select</Fit><Caret $ml={3} />
          </Row>
        </Rows>
      </GroupBody>
      <GroupFoot><Fit w={38} ml={29} size={12.500} color="#555">Editing</Fit></GroupFoot>
    </Group>
  );
}

const CollapseSlot = styled.div`
  width: 98px;
  display: flex;
  align-items: flex-end;
  padding: 0 0 5px 83px;
`;

function Thumbnails() {
  return (
    <ThumbList>
      <ThumbRow $mt={-78}><ThumbNo /><Thumb /></ThumbRow>
      <ThumbRow $mt={20}>
        <ThumbNo><Fit w={14} size={17} color="#555">11</Fit></ThumbNo>
        <Thumb>
          <Icon w={156} h={118} sw={0.6}>
            <path d="M48 8h31" stroke="#999" strokeWidth="3" /><path d="M64 8h7" stroke="#333" strokeWidth="4" /><path d="M48 4h4M64 4h6" stroke="#999" strokeWidth="1" />
            <Dashes x={8} y={15} n={10} h={89} />
            <Stairs x={8} y={14} n={6} dx={8} dy={3.900} /><Stairs x={8} y={45.500} n={6} dx={4} dy={3.900} /><Stairs x={8} y={76.500} n={3} dx={8} dy={7.800} />
            <path d="M60 21h17M64 24h9M61 55h17M63 85h14M61 108h17M5 40v20" stroke="#888" strokeWidth="1" strokeDasharray="2 .6" />
            <path d="M4 111h74" stroke="#aaa" strokeWidth="1.200" strokeDasharray="3 1" />
            <path d="M68 61h86M68 64.500h87M68 68h87M68 71.500h87M68 75h79" stroke="#a8a8a8" strokeWidth="1.300" strokeDasharray="2.500 .6 1 .4 3 .7" />
          </Icon>
        </Thumb>
      </ThumbRow>
      <ThumbRow $mt={19}>
        <ThumbNo><Fit w={16} size={17} color="#555">12</Fit></ThumbNo>
        <Thumb>
          <Tiny $pt={2} $pl={2}>
            {slide12.map((l, i) => (
              <Fit key={i} bearing={0} font={serif} size={4.600} lh={5} color="#444" ml={i === 0 ? 10 : 0} w={i === 0 ? 135 : i === 7 ? 63 : 145}>{l}</Fit>
            ))}
          </Tiny>
          <Icon w={156} h={74} vb="0 42 156 74" sw={0.6}>
            <Dashes x={42} y={43} n={10} h={63} />
            <Stairs x={42} y={48.500} n={6} dx={4} dy={3.900} /><Stairs x={42} y={79} n={3} dx={8} dy={7.700} />
            <path d="M95 58h17M97 88h14M95 110h17M39 45v16" stroke="#888" strokeWidth="1" strokeDasharray="2 .6" />
            <path d="M38 114h74" stroke="#777" strokeWidth="1.300" strokeDasharray="4 1" />
          </Icon>
        </Thumb>
      </ThumbRow>
      <ThumbRow $mt={20}>
        <ThumbNo><Fit w={15} size={17} color="#c8532f">13</Fit></ThumbNo>
        <Thumb $on>
          <Tiny $pt={6.500} $pl={5}><Fit bearing={0} font={serif} size={4} lh={5} color="#999" w={21}>Limitations</Fit></Tiny>
          <Tiny $pt={2.500} $pl={5}>
            {bodyLines.map(([l], i) => <Fit key={i} bearing={0} font={serif} size={4.200} lh={4.320} color="#333" w={i === 6 ? 107 : 131}>{l}</Fit>)}
          </Tiny>
          <Tiny $pt={1.500} $pl={9}>
            {bullets.map(([b, w]) => <Fit key={b} bearing={0} font={serif} size={4.200} lh={5.350} color="#555" w={w * 0.215 + 4}>{"•  " + b}</Fit>)}
          </Tiny>
        </Thumb>
      </ThumbRow>
      <ThumbRow $mt={19}>
        <ThumbNo><Fit w={16} size={17} color="#555">14</Fit></ThumbNo>
        <Thumb>
          <Tiny $pt={6} $pl={7}><Fit bearing={0} font={serif} size={4.300} lh={6} color="#777" w={70}>There are three types of data hazards:</Fit></Tiny>
          {slide14.map(([head, lines, lastW], i) => (
            <Tiny key={i} $pt={i ? 1.600 : 2} $pl={7}>
              {lines.map((l, j) => <Fit key={j} bearing={0} font={serif} size={4.400} lh={5} color="#444" w={j === lines.length - 1 ? lastW : 144}>{j === 0 ? <><b>{head}</b> {l}</> : l}</Fit>)}
            </Tiny>
          ))}
          <Tiny $pt={15.500} $pl={4}><Fit bearing={0} font={serif} size={4.300} lh={5} color="#666" w={107}>DATA DEPENDENCY  Consider the following sequence:</Fit></Tiny>
          <Tiny $pt={2.500} $pl={32}>
            {["ADD  EAX,  ECX   ;load register EAX with the con-", "                 ;tents of ECX plus the contents ", "                 ;of EAX                         ", "MOV  EBX,  EAX   ;load EBX with the contents of  "].map((l) => (
              <Fit key={l} bearing={0} font={`"Liberation Mono", monospace`} size={4.200} lh={4.900} color="#666" w={114}>{l}</Fit>
            ))}
          </Tiny>
        </Thumb>
      </ThumbRow>
    </ThumbList>
  );
}

function SlideEditor() {
  return (
    <Editor>
      <Canvas>
        <Slide>
          <SlideTitle><Fit w={101} bearing={0.200} font={serif} size={18} weight={700} lh={22} color="#8a8a8a">Limitations</Fit></SlideTitle>
          <BodyText>{bodyLines.map(([l, w], i) => <BodyLine key={i} $w={w}>{l}</BodyLine>)}</BodyText>
          <Bullets>{bullets.map(([b, w]) => <Bullet key={b}><Fit w={w} bearing={0.200} size={18} font={serif} color="#1d1d1d">{b}</Fit></Bullet>)}</Bullets>
        </Slide>
        <RightScroll>
          <ScrollButton><Caret $up /></ScrollButton>
          <ScrollThumb $mt={193} $h={18} />
          <ScrollButton $mt={256}><Caret /></ScrollButton>
          <ScrollButton $plain $mt={2}><Icon w={7} h={8} c="#555" sw={1.300}><path d="M.5 3.500l3-3 3 3M.5 7.500l3-3 3 3" /></Icon></ScrollButton>
          <ScrollButton $plain $mt={2}><Icon w={7} h={8} c="#555" sw={1.300}><path d="M.5 .5l3 3 3-3M.5 4.500l3 3 3-3" /></Icon></ScrollButton>
        </RightScroll>
      </Canvas>
      <Notes><Fit w={123} size={16} color="#555">Click to add notes</Fit></Notes>
    </Editor>
  );
}

function Status() {
  const c = "#ffe4d8";
  return (
    <StatusBar>
      <Fit w={80} ml={6} size={11.500} color={c} weight={500}>SLIDE 13 OF 29</Fit>
      <Icon w={16} h={13} ml={20} c={c} sw={1.300}><path d="M7 1.500H1v9.500h6M7 1v11l2-1.500M7 1.500h8v2M9.500 6l2 2.500 4-5M15 7v4h-4" /></Icon>
      <Icon w={13} h={11} ml={772} c={c} sw={1.500}><path d="M0 5h12.500M0 7.700h12.500M1.500 10.400h9" /><path d="M3.500 3.500L6.200 .3 9 3.500z" fill={c} stroke="none" /></Icon>
      <Fit w={37} ml={5} size={12} color={c}>NOTES</Fit>
      <Icon w={13} h={12} ml={22} c="none"><path d="M0 0h13v8H7.500L4.500 12V8H0z" fill={c} /></Icon>
      <Fit w={65} ml={5} size={12} color={c}>COMMENTS</Fit>
      <ActiveView><Icon w={15} h={14} ml={2} c={c} sw={1.500}><path d="M1 1h13.500v12.500H1zM4.500 1v12.500M7 4h5.500v3H7zM6.500 10.500h6.500" /></Icon></ActiveView>
      <Icon w={15} h={14} ml={15} c="none"><path d="M0 0h6.800v6H0zM8.300 0h6.800v6H8.300zM0 7.500h6.800v6H0zM8.300 7.500h6.800v6H8.300z" fill={c} /></Icon>
      <Icon w={14} h={13} ml={24} c={c} sw={1.200}><path d="M.5 1h4.500l2 1.500 2-1.500h4.500v10H9l-2 1.500-2-1.500H.5zM7 2.500v10M2 4h3M2 6.500h3M2 9h3M9 4h3M9 6.500h3M9 9h3" /></Icon>
      <Icon w={14} h={14} ml={26} c={c} sw={1.400}><path d="M0 1h14M1.500 1v7.500h11V1M4 4h6M7 8.500v4M4 13h6" /></Icon>
      <Icon w={7} h={3} ml={19} c={c} sw={2}><path d="M0 1.500h7" /></Icon>
      <ZoomTrack />
      <Icon w={9} h={9} ml={4} c={c} sw={2}><path d="M0 4.500h9M4.500 0v9" /></Icon>
      <Fit w={22} ml={16} size={12} color={c}>70%</Fit>
      <Icon w={15} h={14} ml={15} c={c} sw={1.200}><path d="M.5 4V.5H5M10 .5h4.500V4M14.500 10v3.500H10M5 13.500H.5V10M2 2l3.500 3.500M13 2L9.500 5.500M13 12L9.500 8.500M2 12l3.500-3.500M6 3v3H3M9 3v3h3M9 11V8h3M6 11V8H3" /></Icon>
    </StatusBar>
  );
}

const OfficeIcon = ({ color, letter }: { color: string; letter: React.ReactNode }) => (
  <Icon w={24} h={24} sw={1.200}>
    <rect x="12" y="4" width="11.500" height="17" fill="#e8edf3" stroke={color} strokeWidth=".6" />
    <path d="M14 8h8M14 11h8M14 14h8M14 17h8" stroke={color} />
    <path d="M0 3.500L14 0v24L0 21z" fill={color} stroke="none" />
    <g stroke="#fff" strokeWidth="1.800">{letter}</g>
  </Icon>
);

function Tasks() {
  const c = "#e4e4e4";
  return (
    <Taskbar>
      <Start><Icon w={18} h={18} c="none"><path d="M0 3l7.500-1v6.500H0zM8.700 1.800L18 .5v8H8.700zM0 9.700h7.500V16L0 15zM8.700 9.700H18v8l-9.300-1.300z" fill="#e8e8e8" /></Icon></Start>
      <Search>
        <Icon w={18} h={18} c="#333" sw={1.700}><circle cx="11.500" cy="6.500" r="5.500" /><path d="M7.500 10.500L.5 17.500" /></Icon>
        <Fit w={135} ml={12} size={17} color="#3e3e3e">Type here to search</Fit>
      </Search>
      <AppButton $ml={7} $w={43} $open>
        <Icon w={23} h={22} c="none"><path d="M0 2h9l2 2h12v17H0z" fill="#dca43b" /><path d="M0 6h23v15H0z" fill="#f5cf68" /><path d="M4 21v-8h15v8h-4v-4H8v4z" fill="#3b94d4" /></Icon>
      </AppButton>
      <AppButton $ml={9} $w={43}><OfficeIcon color="#2757a0" letter={<path d="M2.500 8l2 8 2.300-7 2.300 7 2-8" strokeWidth="1.500" />} /></AppButton>
      <AppButton $ml={9} $w={42} $open>
        <Icon w={23} h={21} c="#fff" sw={1.500}><rect width="23" height="20" fill="#d4160f" stroke="none" /><path d="M5 17c4-2 7-9 6.500-12.500C10 2 9.500 6 12 10s7 4 8 2.500c-2-1.500-10-.5-14 3.500" /></Icon>
      </AppButton>
      <AppButton $ml={5} $w={51} $open $on><OfficeIcon color="#d3491f" letter={<path d="M5 17V8h2.500a2.500 2.500 0 0 1 0 5H5" />} /></AppButton>
      <AppButton $ml={6} $w={42} $open>
        <Icon w={26} h={24} ml={-3} c="none"><path d="M1 15C1 7 8 3 15 4c7 1 10 5 9 10-1 6-7 9-13 9-3 0-1-4-4-4s-6 0-6-4z" fill="#b9dcee" /><circle cx="6" cy="13" r="2" fill="#5fa844" /><circle cx="10" cy="8" r="2" fill="#d9523a" /><circle cx="16" cy="8" r="2" fill="#eec23b" /><circle cx="12" cy="15" r="2" fill="#223" /><circle cx="18" cy="16" r="2" fill="#3b7fc4" /><path d="M14 22l1-8 6-11 2 1-5 12z" fill="#c98b3b" /><path d="M20 0l6 1-3 5-3-2z" fill="#d8b98c" /></Icon>
      </AppButton>
      <AppButton $ml={9} $w={43} $open><OfficeIcon color="#1d7044" letter={<path d="M4 8l6 9M10 8l-6 9" />} /></AppButton>
      <AppButton $ml={9} $w={43} $open>
        <Icon w={25} h={24} c="none"><path d="M2 9l3-6 2 3 4-2 1-4 4 3 5 1 1 2c4 8 2 18-9 18C3 24-1 17 2 9z" fill="#f6a523" /><path d="M2 11c0 6 2 11 9 13 8 0 12-4 12-10-2 4-5 6-9 6-6 0-8-5-12-9z" fill="#e8403f" /><circle cx="12" cy="13" r="5" fill="#7a47c9" /><path d="M5 9c4-2 6 0 9 1-2 0-3 2-5 2z" fill="#fbc63b" /></Icon>
      </AppButton>
      <Tray>
        <Icon w={12} h={7} c={c} sw={1.400}><path d="M.5 6.500l5.500-5.500 5.500 5.500" /></Icon>
        <Icon w={13} h={18} ml={22} c={c} sw={1.400}><path d="M2 5h7v8H2zM9 8l3-2v6l-3-2M2.500 2.500c2-2 5-2 7 0M2.500 15.500c2 2 5 2 7 0" /></Icon>
        <Icon w={16} h={15} ml={19} c="none"><path d="M4 0l4 2.500L4 5 0 2.500zM12 0l4 2.500L12 5 8 2.500zM4 5l4 2.500L4 10 0 7.500zM12 5l4 2.500-4 2.500-4-2.500zM8 9.500l4 2.500-4 2.500L4 12z" fill={c} /></Icon>
        <Icon w={17} h={13} ml={17} c={c} sw={1.300}><path d="M5 4h11v8H5zM16.500 6.500v3" /><path d="M6.500 5.500h8v5h-8z" fill={c} stroke="none" /><path d="M2.500 6v3h2" /><circle cx="2.500" cy="3" r="2" fill={c} /></Icon>
        <Icon w={13} h={14} ml={20} c="#aaa" sw={1.300}><path d="M.7 13C.7 6 6 1 12.500 .7M4 13c0-5 4-9 8.500-9M7 13c0-3 2.500-6 5.500-6" /><path d="M10 13a3 3 0 0 1 2.500-3V13z" fill={c} stroke="none" /></Icon>
        <Icon w={18} h={13} ml={17} c="#c8c8c8" sw={1.200}><path d="M.6 4.500H3l4-3.500v11L3 8.500H.6zM9.500 4.500c1 1 1 3 0 4M12.500 2.500c2 2.500 2 5.500 0 8M15 .5c3.300 4 3.300 8 0 12" /></Icon>
        <Clock><Fit w={44} size={12.500} color={c}>3:03 PM</Fit><Fit w={47} size={12.500} color={c}>1/2/2021</Fit></Clock>
        <Icon w={24} h={26} ml={22} mt={4} c="none">
          <path d="M0 0h17v12H10l-4 4v-4H0z" fill={c} /><path d="M3 3.500h11M3 6h11M3 8.500h11" stroke="#222" />
          <circle cx="16" cy="17" r="7.500" fill="#222" stroke="#777" /><text x="12.800" y="21.500" fontSize="12" fontFamily={ui} fill="#eee">2</text>
        </Icon>
      </Tray>
    </Taskbar>
  );
}

function PlayerChrome() {
  return (
    <Player>
      <Back><Icon w={16} h={13} c="#fff" sw={1.700}><path d="M16 6.500H1.500M7 .8L1.300 6.500 7 12.200" /></Icon></Back>
      <Controls>
        <Seek><Played /><Knob /><Remaining /></Seek>
        <Times><Fit w={47} size={15} color="#fff">0:12:17</Fit><Fit w={47} size={15} color="#fff">5:34:33</Fit></Times>
        <ButtonBar>
          <Buttons>
            <Button><Icon w={26} h={22} c="#fff" sw={1.700}><path d="M1 7.500h3.500L10 2v18l-5.500-5.500H1zM13.500 7.800c1.500 2 1.500 4.500 0 6.500M17 4.500c3.500 4 3.500 9 0 13M20.500 1.200c5.500 6 5.500 13.500 0 19.500" /></Icon></Button>
            <Button><Icon w={26} h={23} c="#fff" sw={1.600}><path d="M1 1h24.200v16.500H9L5 21.700v-4.200H1zM4 11.300h18.500M4 14.300h18.500" /></Icon></Button>
          </Buttons>
          <Centre>
            <Button $frame="full">
              <SkipStack>
                <Icon w={26} h={10} c="#fff" sw={1.700}><path d="M.9 3v6.300h6.200M1 9C6-1.500 20-1.500 25 9.500" /></Icon>
                <Fit w={15} size={15.500} color="#fff">10</Fit>
              </SkipStack>
            </Button>
            <Button $frame="fade"><Icon w={10} h={19} c="#fff" sw={2}><path d="M1 0v19M9 0v19" /></Icon></Button>
            <Button>
              <SkipStack>
                <Icon w={26} h={10} c="#fff" sw={1.700}><path d="M25.100 3v6.300h-6.200M25 9C20-1.500 6-1.500 1 9.500" /></Icon>
                <Fit w={16} size={15.500} color="#fff">30</Fit>
              </SkipStack>
            </Button>
          </Centre>
          <Buttons $end>
            <Button><Icon w={26} h={26} c="#fff" sw={1.700}><path d="M1 25l1.800-7.500L18.500 1.900a3.800 3.800 0 0 1 5.500 5.500L8.300 23.200zM16.500 4l5.500 5.500M2.800 17.500a5 5 0 0 1 5.500 5.700" /></Icon></Button>
            <Button><Icon w={26} h={17} c="#fff" sw={1.600}><path d="M.8 .8h24.400v15.400H.8z" /><path d="M10.500 6h12v7.500h-12z" /><path d="M12 12v-2.500l2-1.500 3 3 1.500-1.500L21 12z" fill="#fff" stroke="none" /></Icon></Button>
            <Button><Icon w={26} h={26} c="#fff" sw={1.700}><path d="M25.500 .5L15 11M15 3.500V11h8M.5 25.500L11 15M3 15h8v8" /></Icon></Button>
            <Button><Icon w={24} h={4} c="none"><circle cx="3" cy="2" r="1.700" fill="#fff" /><circle cx="12" cy="2" r="1.700" fill="#fff" /><circle cx="21" cy="2" r="1.700" fill="#fff" /></Icon></Button>
          </Buttons>
        </ButtonBar>
      </Controls>
    </Player>
  );
}

export default function App() {
  return (
    <>
      <Global />
      <Stage>
        <Shared>
          <Window>
            <TopBar />
            <TabStrip />
            <Ribbon>
              <ClipboardGroup /><SlidesGroup /><FontGroup /><ParagraphGroup /><DrawingGroup /><EditingGroup />
              <CollapseSlot><Icon w={9} h={6} c="#555" sw={1.600}><path d="M.5 5l4-4 4 4" /></Icon></CollapseSlot>
            </Ribbon>
            <Work>
              <Thumbnails />
              <ScrollTrack>
                <ScrollButton><Caret $up /></ScrollButton>
                <ScrollThumb $mt={186} $h={82} />
                <ScrollButton $mt={292}><Caret /></ScrollButton>
              </ScrollTrack>
              <Divider />
              <SlideEditor />
            </Work>
            <Status />
          </Window>
          <Tasks />
        </Shared>
        <Participants>
          <Tile>
            <Avatar><Fit w={34} size={64} weight={500} color="#fff">D</Fit></Avatar>
            <TileName><Fit w={239} size={19.500} color="#e6e6e6">Dr. Mohammad Shafiul Alam</Fit></TileName>
          </Tile>
        </Participants>
        <ShareBar>
          <Grip />
          <Icon w={17} h={15} ml={15} c="#2b2b2b" sw={2}><path d="M5 8.500H1V1h10v3M7 5.500h9V14H7z" /></Icon>
          <Fit w={191} ml={11} size={13} weight={500} color="#1a1a1a">You are sharing your entire screen.</Fit>
          <StopButton><Fit w={71} size={13} weight={500} color="#eaf2ff">Stop Sharing</Fit></StopButton>
          <ShareDivider />
          <HideButton />
        </ShareBar>
        <PlayerChrome />
      </Stage>
    </>
  );
}
